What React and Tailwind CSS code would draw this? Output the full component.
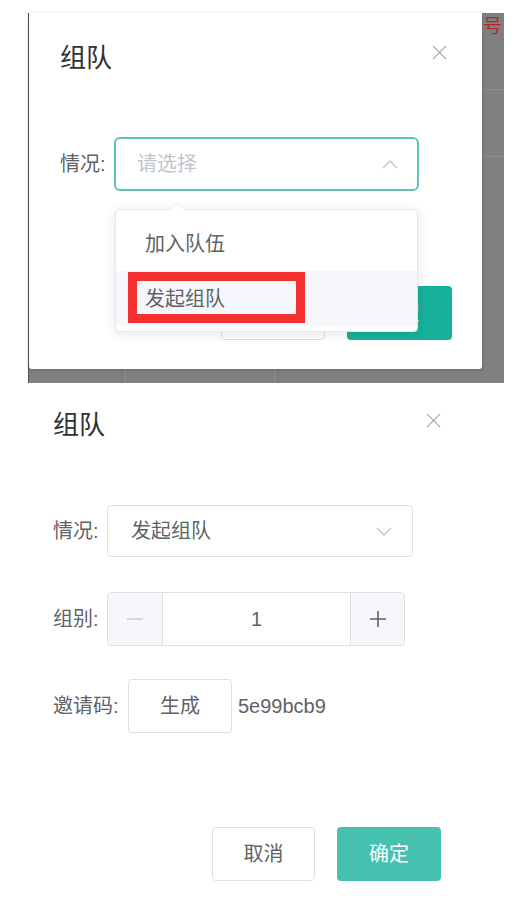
const Close = ({ className }) => (
  <svg viewBox="0 0 16 16" className={className} fill="none" stroke="currentColor" strokeWidth="1.3">
    <path d="M1 1l14 14M15 1L1 15" />
  </svg>
);

const Chevron = ({ up }) => (
  <svg viewBox="0 0 16 9" className="w-[16px] h-[9px]" fill="none" stroke="#c0c4cc" strokeWidth="1.3">
    <path d={up ? "M1 8l7-7 7 7" : "M1 1l7 7 7-7"} />
  </svg>
);

const Minus = () => (
  <svg viewBox="0 0 18 18" className="w-[18px] h-[18px]" fill="none" stroke="#c8ccd3" strokeWidth="1.6">
    <path d="M1 9h16" />
  </svg>
);

const Plus = () => (
  <svg viewBox="0 0 18 18" className="w-[18px] h-[18px]" fill="none" stroke="#606266" strokeWidth="1.6">
    <path d="M1 9h16M9 1v16" />
  </svg>
);

// screenshot with the dropdown open
const OpenDialog = () => (
  <div className="h-[383px] pt-[13px] pl-[28px]">
    <div className="flex w-[476px] h-[370px] bg-[#808080] border-l border-[#4e4e4e]">
      <div className="flex flex-col w-[453px]">
        <div className="relative h-[356px] bg-white rounded-b-[3px] shadow-[0_1px_4px_rgba(0,0,0,0.2)] px-[31px] pt-[27px]">
          {/* Header */}
          <div className="flex items-start justify-between">
            <span className="text-[26px] leading-[36px] text-[#303133]">组队</span>
            <Close className="w-[15px] h-[15px] mt-[5px] mr-[4px] text-[#a0a3a8]" />
          </div>

          {/* Select */}
          <div className="flex items-center mt-[61px]">
            <span className="w-[47px] mr-[7px] text-[20px] text-[#606266] whitespace-nowrap">情况:</span>
            <div className="flex items-center justify-between w-[305px] h-[54px] border-2 border-[#5cc3b5] rounded-[6px] pl-[21px] pr-[19px]">
              <span className="text-[20px] text-[#c0c4cc]">请选择</span>
              <Chevron up />
            </div>
          </div>

          {/* Footer */}
          <div className="flex justify-end gap-[22px] mt-[95px] -mr-[1px]">
            <button className="w-[104px] h-[54px] border border-[#dcdfe6] rounded-[4px] bg-white text-[20px] text-[#606266]">
              取消
            </button>
            <button className="w-[105px] h-[54px] rounded-[4px] bg-[#17b19b] text-[20px] text-white">
              确定
            </button>
          </div>

          {/* Dropdown */}
          <div className="absolute left-[86px] top-[196px] w-[303px] h-[123px] bg-white border border-[#e4e7ed] rounded-[4px] shadow-[0_2px_12px_rgba(0,0,0,0.1)] py-[6px]">
            <div className="absolute -top-[6px] left-[56px] w-[11px] h-[11px] rotate-45 bg-white border-l border-t border-[#eceef2]" />
            <div className="flex items-center h-[55px] pl-[29px] text-[20px] text-[#606266]">加入队伍</div>
            <div className="flex items-center h-[55px] pl-[29px] text-[20px] text-[#606266] bg-[#f5f7fa]">发起组队</div>
          </div>

          {/* Annotation */}
          <div className="absolute left-[99px] top-[259px] w-[177px] h-[51px] border-[9px] border-[#f42f2f]" />
        </div>
        <div className="flex flex-1">
          <div className="w-[97px] border-r border-[#8e8e8e]" />
          <div className="w-[149px] border-r border-[#8e8e8e]" />
        </div>
      </div>
      <div className="flex-1 flex flex-col">
        <div className="h-[77px] border-b border-[#8b8b8b] pt-[3px] pl-[1px]">
          <span className="block text-[19px] leading-[22px] text-[#b02a2a]">号</span>
        </div>
        <div className="h-[67px] border-b border-[#8b8b8b]" />
      </div>
    </div>
  </div>
);

// screenshot with the choice made
const FilledDialog = () => (
  <div className="w-[529px] pl-[53px] pt-[24px] pb-[34px] bg-white">
    <div className="flex items-start justify-between w-[388px]">
      <span className="text-[26px] leading-[36px] text-[#303133]">组队</span>
      <Close className="w-[15px] h-[15px] mt-[6px] text-[#a0a3a8]" />
    </div>

    <div className="flex items-center mt-[62px]">
      <span className="w-[47px] mr-[7px] text-[20px] text-[#606266] whitespace-nowrap">情况:</span>
      <div className="flex items-center justify-between w-[306px] h-[52px] border border-[#dcdfe6] rounded-[4px] pl-[23px] pr-[20px]">
        <span className="text-[20px] text-[#606266]">发起组队</span>
        <Chevron />
      </div>
    </div>

    <div className="flex items-center mt-[35px]">
      <span className="w-[47px] mr-[7px] text-[20px] text-[#606266] whitespace-nowrap">组别:</span>
      <div className="flex w-[298px] h-[54px] border border-[#dcdfe6] rounded-[4px] overflow-hidden">
        <div className="flex items-center justify-center w-[55px] bg-[#f5f7fa] border-r border-[#dcdfe6]">
          <Minus />
        </div>
        <div className="flex-1 flex items-center justify-center text-[20px] text-[#606266]">1</div>
        <div className="flex items-center justify-center w-[54px] bg-[#f5f7fa] border-l border-[#dcdfe6]">
          <Plus />
        </div>
      </div>
    </div>

    <div className="flex items-center mt-[33px]">
      <span className="w-[67px] mr-[8px] text-[20px] text-[#606266] whitespace-nowrap">邀请码:</span>
      <button className="w-[104px] h-[54px] border border-[#dcdfe6] rounded-[4px] bg-white text-[20px] text-[#606266]">
        生成
      </button>
      <span className="ml-[6px] text-[20px] text-[#606266]">5e99bcb9</span>
    </div>

    <div className="flex justify-end gap-[22px] mt-[94px] w-[388px]">
      <button className="w-[103px] h-[54px] border border-[#dcdfe6] rounded-[4px] bg-white text-[20px] text-[#606266]">
        取消
      </button>
      <button className="w-[104px] h-[54px] rounded-[4px] bg-[#46c1b0] text-[20px] text-white">
        确定
      </button>
    </div>
  </div>
);

export default function App() {
  return (
    <div className="w-[529px] bg-white font-['Liberation_Sans','Noto_Sans_CJK_SC',sans-serif]">
      <OpenDialog />
      <FilledDialog />
    </div>
  );
}
